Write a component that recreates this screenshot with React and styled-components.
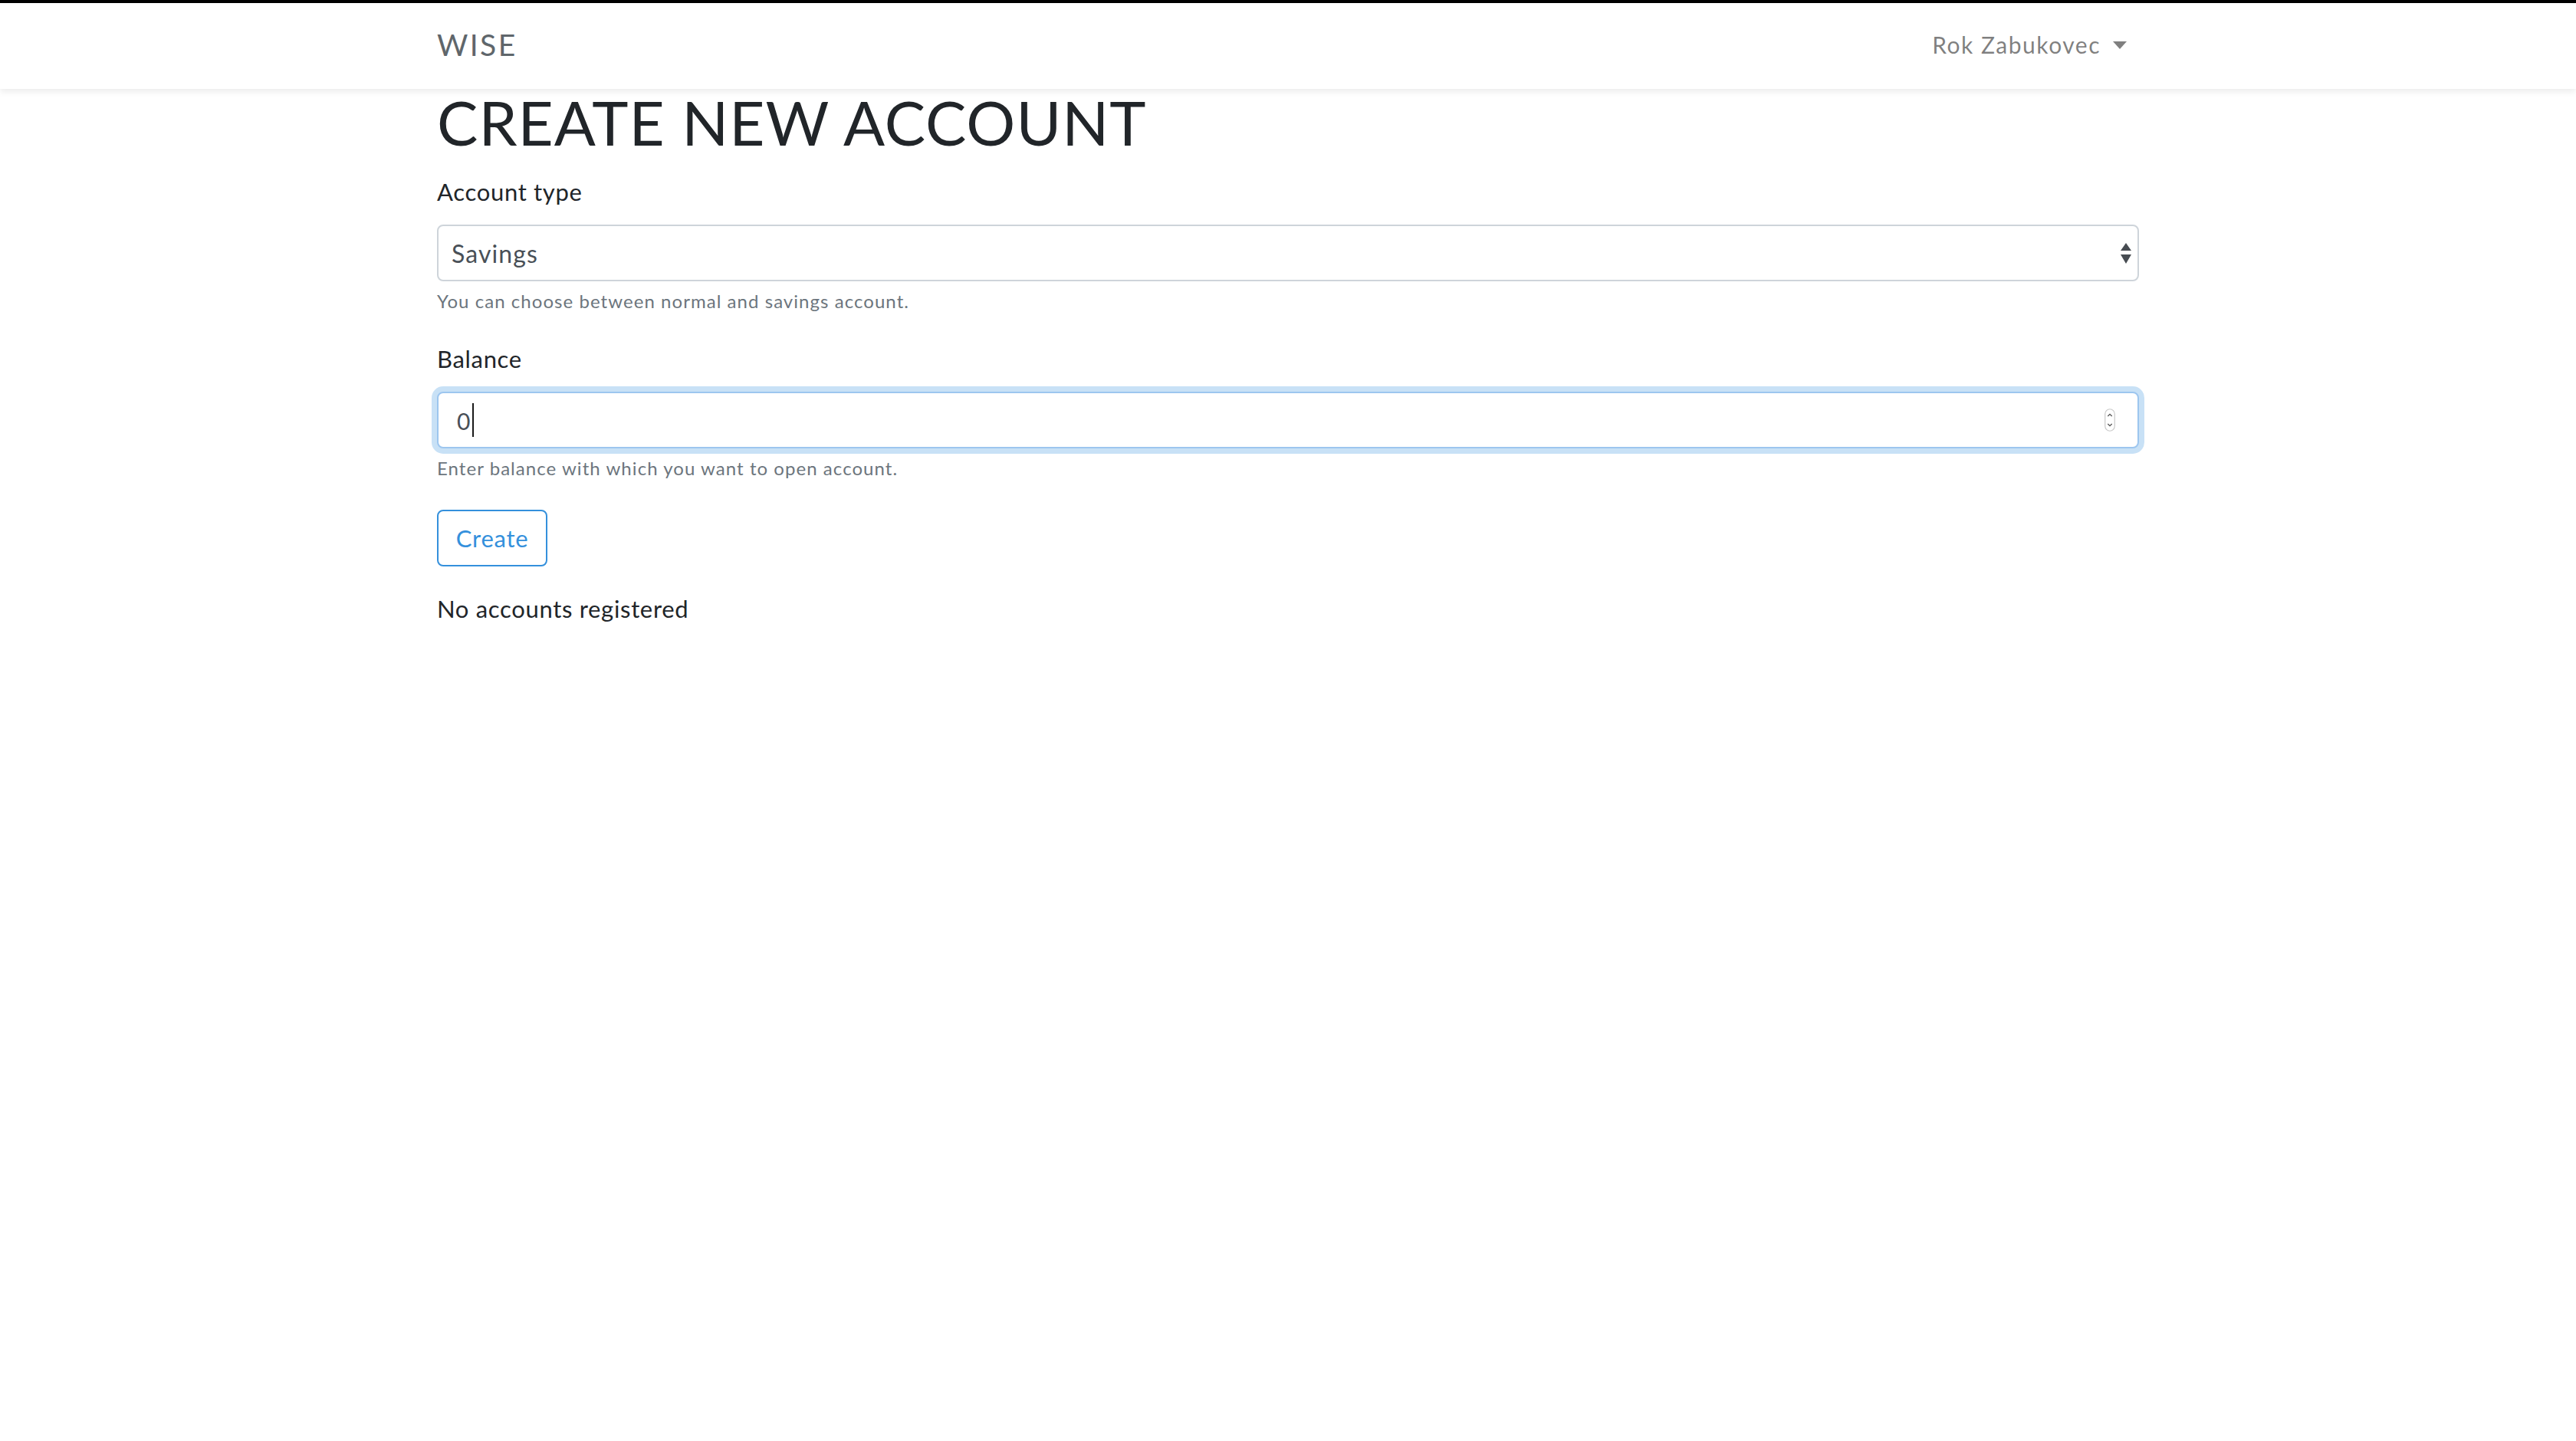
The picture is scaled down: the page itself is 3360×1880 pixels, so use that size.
import React from "react";
import styled, { createGlobalStyle } from "styled-components";

const Global = createGlobalStyle`
  html, body { margin: 0; padding: 0; background: #ffffff; }
  body {
    font-family: Lato, "Noto Sans", "Liberation Sans", sans-serif;
    color: #212529;
    letter-spacing: 0.68px;
    -webkit-font-smoothing: antialiased;
  }
  * { box-sizing: border-box; }
`;

const TopStrip = styled.div`
  height: 4px;
  background: #000;
`;

const Navbar = styled.nav`
  height: 112px;
  background: #fff;
  box-shadow: 0 4px 8px rgba(0, 0, 0, 0.075);
  position: relative;
  z-index: 1;
`;

const Container = styled.div`
  width: 2220px;
  margin: 0 auto;
`;

const NavInner = styled(Container)`
  height: 100%;
  display: flex;
  align-items: center;
  justify-content: space-between;
  padding-bottom: 4px;
`;

const Brand = styled.a`
  font-size: 39px;
  line-height: 56px;
  color: #5f666b;
  text-decoration: none;
  letter-spacing: 2.4px;
`;

const UserToggle = styled.a`
  display: flex;
  align-items: center;
  font-size: 30px;
  line-height: 48px;
  color: rgba(0, 0, 0, 0.5);
  text-decoration: none;
  letter-spacing: 1.5px;
  padding-right: 16px;
  &::after {
    content: "";
    display: inline-block;
    margin-left: 16px;
    margin-top: 2px;
    border-top: 10px solid rgba(0, 0, 0, 0.5);
    border-left: 9px solid transparent;
    border-right: 9px solid transparent;
  }
`;

const Main = styled(Container)`
  display: flex;
  flex-direction: column;
  align-items: flex-start;
`;

const Title = styled.h1`
  margin: 0 0 24px;
  font-size: 80px;
  line-height: 86px;
  font-weight: 400;
  letter-spacing: 1px;
  color: #212529;
`;

const Form = styled.form`
  width: 100%;
  display: flex;
  flex-direction: column;
  align-items: flex-start;
`;

const FormGroup = styled.div`
  width: 100%;
  margin-bottom: ${(p) => p.$mb || 32}px;
`;

const Label = styled.label`
  display: block;
  font-size: 31px;
  line-height: 48px;
  margin-bottom: 19px;
  color: #212529;
`;

const Field = styled.div`
  position: relative;
  width: 100%;
  height: 74px;
  display: flex;
  align-items: center;
  background: #fff;
  border: 2px solid ${(p) => (p.$focused ? "#9dc6ef" : "#ced4da")};
  border-radius: 8px;
  padding-left: ${(p) => p.$pl}px;
  font-size: ${(p) => p.$fs || 30}px;
  letter-spacing: 1.1px;
  color: #495057;
  box-shadow: ${(p) => (p.$focused ? "0 0 0 7px rgba(52, 144, 220, 0.27)" : "none")};
`;

const Value = styled.span`
  line-height: 1;
  padding-top: 1px;
`;

const Caret = styled.span`
  display: inline-block;
  width: 2px;
  height: 44px;
  background: #1a1a1a;
  margin-left: 1px;
`;

const SelectArrows = styled.svg`
  position: absolute;
  right: 8px;
  top: 22px;
`;

const Spinner = styled.svg`
  position: absolute;
  right: 29px;
  top: 20px;
`;

const Help = styled.small`
  display: block;
  margin-top: 7px;
  font-size: 24px;
  line-height: 38px;
  letter-spacing: 1.05px;
  color: #6c757d;
`;

const Button = styled.button`
  height: 74px;
  width: 144px;
  margin-top: 3px;
  margin-bottom: 31px;
  padding: 0;
  background: #fff;
  border: 2px solid #3490dc;
  border-radius: 8px;
  color: #3490dc;
  font-family: inherit;
  font-size: 31px;
  letter-spacing: 0.7px;
  line-height: 1;
  cursor: pointer;
`;

const Empty = styled.p`
  margin: 0;
  font-size: 31px;
  line-height: 48px;
  color: #212529;
`;

export default function App() {
  return (
    <>
      <Global />
      <TopStrip />
      <Navbar>
        <NavInner>
          <Brand href="#">WISE</Brand>
          <UserToggle href="#">Rok Zabukovec</UserToggle>
        </NavInner>
      </Navbar>
      <Main>
        <Title>CREATE NEW ACCOUNT</Title>
        <Form onSubmit={(e) => e.preventDefault()}>
          <FormGroup>
            <Label>Account type</Label>
            <Field $pl={17} $fs={32}>
              <Value>Savings</Value>
              <SelectArrows width="14" height="27" viewBox="0 0 14 27">
                <path d="M7 0 L0 10 H14 Z M7 27 L0 15 H14 Z" fill="#474c52" />
              </SelectArrows>
            </Field>
            <Help>You can choose between normal and savings account.</Help>
          </FormGroup>
          <FormGroup $mb={32}>
            <Label>Balance</Label>
            <Field $pl={24} $focused>
              <Value>0</Value>
              <Caret />
              <Spinner width="14" height="30" viewBox="0 0 14 30">
                <rect x="0.75" y="0.75" width="12.5" height="28.5" rx="6.25" fill="#fff" stroke="#c9c9c9" strokeWidth="1.2" />
                <path d="M4.3 10 L7 7.3 L9.7 10" fill="none" stroke="#555" strokeWidth="1.3" />
                <path d="M4.3 20 L7 22.7 L9.7 20" fill="none" stroke="#555" strokeWidth="1.3" />
              </Spinner>
            </Field>
            <Help>Enter balance with which you want to open account.</Help>
          </FormGroup>
          <Button type="submit">Create</Button>
        </Form>
        <Empty>No accounts registered</Empty>
      </Main>
    </>
  );
}
